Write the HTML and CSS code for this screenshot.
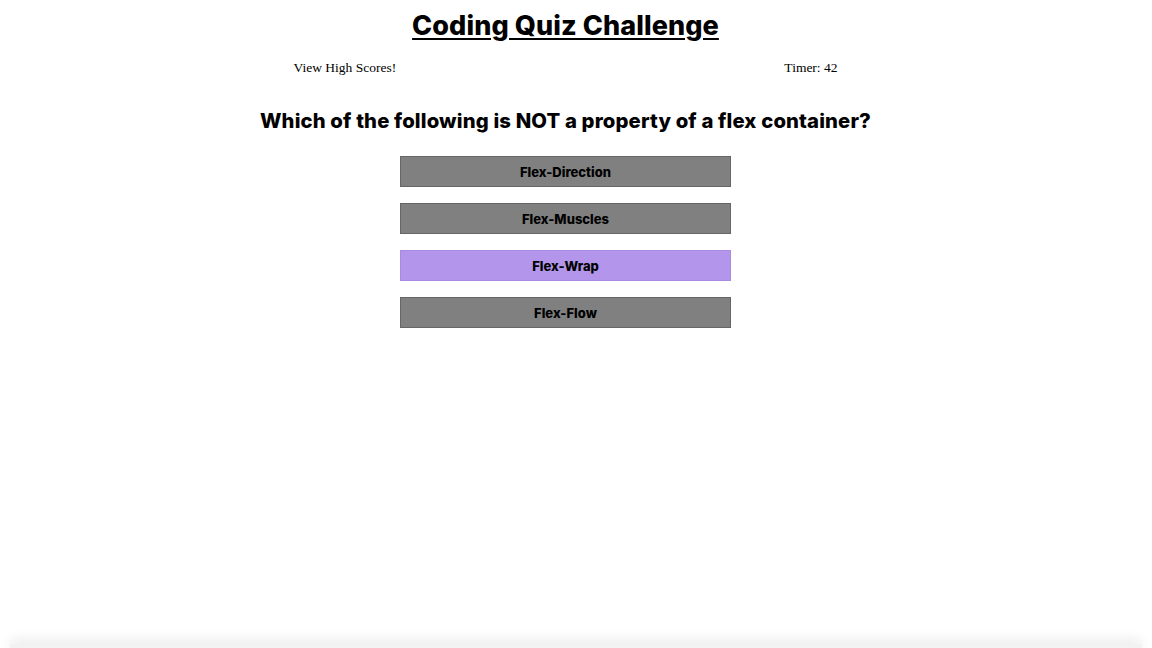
FILE: index.html
```html
<!DOCTYPE html>
<html>
<head>
<meta charset="utf-8">
<link rel="stylesheet" href="styles.css">
</head>
<body>
<div class="page">
  <header class="header">
    <h1 class="title">Coding Quiz Challenge</h1>
    <nav class="nav">
      <a class="scores">View High Scores!</a>
      <span class="timer">Timer: 42</span>
    </nav>
  </header>
  <main class="quiz">
    <h2 class="question">Which of the following is NOT a property of a flex container?</h2>
    <div class="answers">
      <button class="answer">Flex-Direction</button>
      <button class="answer">Flex-Muscles</button>
      <button class="answer active">Flex-Wrap</button>
      <button class="answer">Flex-Flow</button>
    </div>
  </main>
</div>
<div class="shelf"></div>
</body>
</html>
```
FILE: styles.css
```css
html, body { margin: 0; padding: 0; background: #fff; }
body { min-height: 100vh; display: flex; flex-direction: column; overflow: hidden; }
.page { width: 1131px; flex: 1; display: flex; flex-direction: column; align-items: center; }
.header { display: flex; flex-direction: column; align-items: center; width: 100%; }
.title {
  font-family: "Inter", "Liberation Sans", sans-serif;
  font-weight: 800; font-size: 27px; letter-spacing: 0.1px;
  text-decoration: underline; text-decoration-thickness: 2px; text-underline-offset: 3px;
  margin: 9px 0 0; line-height: 34px; color: #000;
}
.nav { width: 544px; display: flex; justify-content: space-between; margin-top: 16px;
  font-family: "Liberation Serif", serif; font-size: 13.5px; color: #000; line-height: 18px; }
.scores { cursor: pointer; }
.quiz { display: flex; flex-direction: column; align-items: center; }
.question {
  font-family: "Inter", "Liberation Sans", sans-serif; font-weight: 800; font-size: 20.3px; letter-spacing: 0.15px;
  margin: 31px 0 0; line-height: 26px; color: #000;
}
.answers { display: flex; flex-direction: column; gap: 16px; margin-top: 22px; }
.answer {
  width: 331px; height: 31px; background: #808080; border: 1px solid #666;
  font-family: "Inter", "Liberation Sans", sans-serif; font-weight: 800; font-size: 13px; color: #000;
  padding: 0; margin: 0;
}
.answer.active { background: #b396eb; border-color: #a88be0; }
.shelf { height: 8px; box-shadow: 0 -4px 12px rgba(0,0,0,0.1); margin: 0 10px -4px; background: #f2f2f2; }
```
